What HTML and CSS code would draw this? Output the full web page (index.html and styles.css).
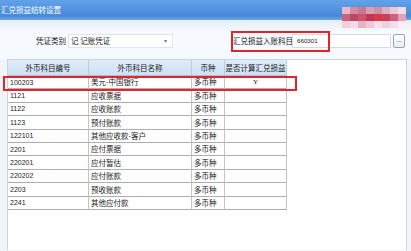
FILE: index.html
```html
<!DOCTYPE html>
<html lang="zh">
<head>
<meta charset="utf-8">
<title>汇兑损益结转设置</title>
<link rel="stylesheet" href="styles.css">
</head>
<body>
<div class="window">
  <div class="titlebar"><span class="title">汇兑损益结转设置</span></div>
  <div class="mosaic">
    <i style="background:#e6b8c8"></i><i style="background:#d4899f"></i><i style="background:#c87890"></i><i style="background:#d8a0b0"></i><i style="background:#d090a8"></i><i style="background:#e0b0c0"></i><i style="background:#ebc8d4"></i><i style="background:#f2dce4"></i>
    <i style="background:#c86080"></i><i style="background:#b84868"></i><i style="background:#d05070"></i><i style="background:#c03858"></i><i style="background:#d83848"></i><i style="background:#c84060"></i><i style="background:#d06080"></i><i style="background:#e0a0b8"></i>
    <i style="background:#f0d0dc"></i><i style="background:#f4dce4"></i><i style="background:#e8b0c0"></i><i style="background:#f0c8d4"></i><i style="background:#f8e0e8"></i><i style="background:#f0d0dc"></i><i style="background:#f4e0e8"></i><i style="background:#fbeef2"></i>
  </div>
  <div class="toolbar">
    <div class="field voucher">
      <span class="label">凭证类别</span>
      <div class="select"><span class="sel-text">记 记账凭证</span><span class="arrow">▾</span></div>
    </div>
    <div class="field subject">
      <span class="label">汇兑损益入账科目</span>
      <div class="input">660301</div>
      <div class="browse">...</div>
    </div>
  </div>
  <div class="mark mark-subject"></div>
  <div class="frame">
    <div class="grid">
      <div class="hd">外币科目编号</div><div class="hd">外币科目名称</div><div class="hd">币种</div><div class="hd">是否计算汇兑损益</div>
      <div class="c num">100203</div><div class="c">美元-中国银行</div><div class="c">多币种</div><div class="c ctr">Y</div>
      <div class="c num">1121</div><div class="c">应收票据</div><div class="c">多币种</div><div class="c ctr"></div>
      <div class="c num">1122</div><div class="c">应收账款</div><div class="c">多币种</div><div class="c ctr"></div>
      <div class="c num">1123</div><div class="c">预付账款</div><div class="c">多币种</div><div class="c ctr"></div>
      <div class="c num">122101</div><div class="c">其他应收款-客户</div><div class="c">多币种</div><div class="c ctr"></div>
      <div class="c num">2201</div><div class="c">应付票据</div><div class="c">多币种</div><div class="c ctr"></div>
      <div class="c num">220201</div><div class="c">应付暂估</div><div class="c">多币种</div><div class="c ctr"></div>
      <div class="c num">220202</div><div class="c">应付账款</div><div class="c">多币种</div><div class="c ctr"></div>
      <div class="c num">2203</div><div class="c">预收账款</div><div class="c">多币种</div><div class="c ctr"></div>
      <div class="c num">2241</div><div class="c">其他应付款</div><div class="c">多币种</div><div class="c ctr"></div>
    </div>
  </div>
  <div class="mark mark-row"></div>
</div>
</body>
</html>
```
FILE: styles.css
```css
* { box-sizing: border-box; }
html, body { margin: 0; padding: 0; }
body {
  width: 411px;
  height: 251px;
  overflow: hidden;
  background: #f1f5fa;
  font-family: "Noto Sans CJK SC", "Liberation Sans", sans-serif;
  color: #1a1a1a;
}
.window {
  position: relative;
  width: 411px;
  height: 251px;
  display: flex;
  flex-direction: column;
}
.titlebar {
  height: 20px;
  flex: none;
  background: linear-gradient(#62a2e8, #4589d9 80%, #6fa6e2);
  display: flex;
  align-items: center;
  padding-left: 1px;
}
.title {
  color: #fff;
  font-size: 7.5px;
  line-height: 1;
}
.mosaic {
  position: absolute;
  left: 342px;
  top: 7px;
  display: grid;
  grid-template-columns: repeat(8, 8px);
  grid-template-rows: repeat(3, 7px);
  filter: blur(0.6px);
}
.mosaic i { display: block; }
.toolbar {
  height: 39px;
  flex: none;
  display: flex;
  align-items: center;
  padding: 2px 0 0 36px;
  background: linear-gradient(#e4eef9, #f6f9fd 30%, #f6f9fd);
}
.field {
  display: flex;
  align-items: center;
}
.label {
  font-size: 7.5px;
  line-height: 1;
  white-space: nowrap;
}
.voucher .label { width: 32px; }
.select {
  width: 105px;
  height: 14px;
  background: #fff;
  border: 1px solid #dfe5ec;
  display: flex;
  align-items: center;
  justify-content: space-between;
  padding: 0 5px 0 2px;
}
.sel-text { font-size: 7.5px; line-height: 1; }
.arrow { font-size: 6px; color: #777; line-height: 1; }
.subject { margin-left: 60px; }
.subject .label { width: 59px; }
.input {
  width: 99px;
  height: 14px;
  background: #fff;
  border: 1px solid #d3dbe4;
  font-family: "Liberation Sans", sans-serif;
  font-size: 6.2px;
  display: flex;
  align-items: center;
  padding-left: 4px;
}
.browse {
  width: 12px;
  height: 14px;
  margin-left: 2px;
  border: 1px solid #9aa3ad;
  border-radius: 2px;
  background: linear-gradient(#ffffff, #e8ecf0);
  font-size: 6px;
  line-height: 9px;
  text-align: center;
  color: #333;
}
.mark {
  position: absolute;
  border: 2px solid #e0262c;
  pointer-events: none;
}
.mark-subject { left: 231px; top: 31px; width: 99px; height: 21px; }
.mark-row { left: 3px; top: 76px; width: 294px; height: 15px; }
.frame {
  margin-left: 7px;
  width: 400px;
  height: 191px;
  flex: none;
  background: #fff;
  border-top: 1px solid #c9d3de;
  border-left: 1px solid #c9d3de;
  border-right: 1px solid #c9d3de;
}
.grid {
  display: grid;
  grid-template-columns: 81px 103px 33px 62px;
  grid-template-rows: 16px;
  grid-auto-rows: 13.4px;
  width: 279px;
}
.hd {
  background: linear-gradient(#dfebf8, #cfe1f4);
  border-right: 1px solid #b9cbe0;
  border-bottom: 1px solid #a9bfd7;
  font-size: 7.5px;
  line-height: 1;
  display: flex;
  align-items: center;
  justify-content: center;
  white-space: nowrap;
  overflow: hidden;
}
.c {
  border-right: 1px solid #c4c4c4;
  border-bottom: 1px solid #aeaeae;
  font-size: 7.5px;
  line-height: 1;
  display: flex;
  align-items: center;
  padding-left: 2px;
  white-space: nowrap;
  overflow: hidden;
}
.c.num {
  font-family: "Liberation Sans", sans-serif;
  font-size: 7px;
  padding-left: 2px;
}
.c.ctr {
  justify-content: center;
  padding-left: 0;
  font-family: "Liberation Serif", serif;
  font-size: 7px;
}
```
